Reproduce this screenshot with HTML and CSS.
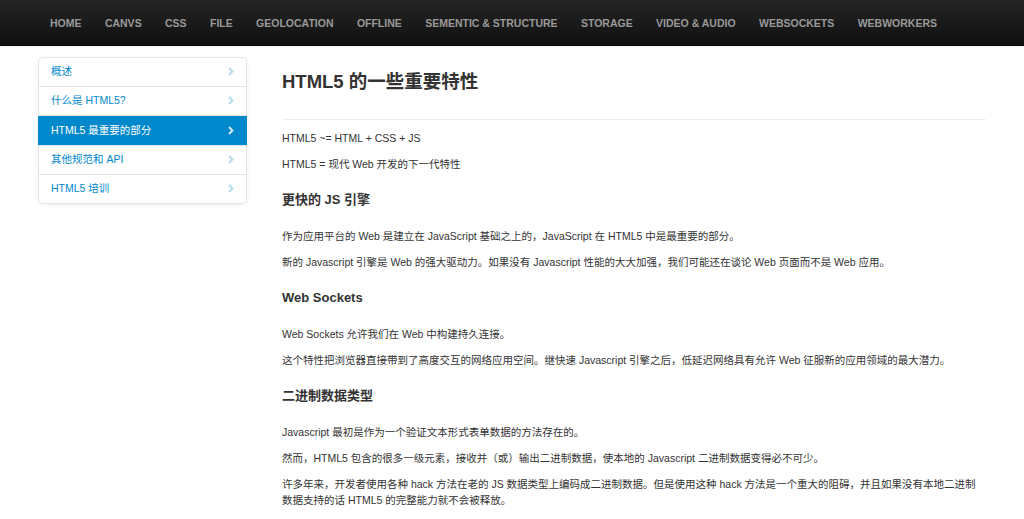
FILE: index.html
```html
<!DOCTYPE html>
<html lang="zh">
<head>
    <meta charset="UTF-8">
    <meta name="viewport" content="width=device-width, initial-scale=1.0">
    <title>HTML5 的一些重要特性</title>
    <link rel="stylesheet" href="styles.css">
</head>
<body>
    <div class="navbar">
        <ul class="nav">
            <li><a href="#">HOME</a></li>
            <li><a href="#">CANVS</a></li>
            <li><a href="#">CSS</a></li>
            <li><a href="#">FILE</a></li>
            <li><a href="#">GEOLOCATION</a></li>
            <li><a href="#">OFFLINE</a></li>
            <li><a href="#">SEMENTIC &amp; STRUCTURE</a></li>
            <li><a href="#">STORAGE</a></li>
            <li><a href="#">VIDEO &amp; AUDIO</a></li>
            <li><a href="#">WEBSOCKETS</a></li>
            <li><a href="#">WEBWORKERS</a></li>
        </ul>
    </div>
    <div class="container">
        <ul class="sidenav">
            <li><a href="#">概述<svg class="chevron" viewBox="0 0 6 9"><polyline points="1,1 4.5,4.5 1,8"/></svg></a></li>
            <li><a href="#">什么是 HTML5?<svg class="chevron" viewBox="0 0 6 9"><polyline points="1,1 4.5,4.5 1,8"/></svg></a></li>
            <li class="active"><a href="#">HTML5 最重要的部分<svg class="chevron" viewBox="0 0 6 9"><polyline points="1,1 4.5,4.5 1,8"/></svg></a></li>
            <li><a href="#">其他规范和 API<svg class="chevron" viewBox="0 0 6 9"><polyline points="1,1 4.5,4.5 1,8"/></svg></a></li>
            <li><a href="#">HTML5 培训<svg class="chevron" viewBox="0 0 6 9"><polyline points="1,1 4.5,4.5 1,8"/></svg></a></li>
        </ul>
        <div class="content">
            <div class="page-header">
                <h1>HTML5 的一些重要特性</h1>
            </div>
            <p>HTML5 ~= HTML + CSS + JS</p>
            <p>HTML5 = 现代 Web 开发的下一代特性</p>

            <h3>更快的 JS 引擎</h3>
            <p>作为应用平台的 Web 是建立在 JavaScript 基础之上的，JavaScript 在 HTML5 中是最重要的部分。</p>
            <p>新的 Javascript 引擎是 Web 的强大驱动力。如果没有 Javascript 性能的大大加强，我们可能还在谈论 Web 页面而不是 Web 应用。</p>

            <h3>Web Sockets</h3>
            <p>Web Sockets 允许我们在 Web 中构建持久连接。</p>
            <p>这个特性把浏览器直接带到了高度交互的网络应用空间。继快速 Javascript 引擎之后，低延迟网络具有允许 Web 征服新的应用领域的最大潜力。</p>

            <h3>二进制数据类型</h3>
            <p>Javascript 最初是作为一个验证文本形式表单数据的方法存在的。</p>
            <p>然而，HTML5 包含的很多一级元素，接收并（或）输出二进制数据，使本地的 Javascript 二进制数据变得必不可少。</p>
            <p>许多年来，开发者使用各种 hack 方法在老的 JS 数据类型上编码成二进制数据。但是使用这种 hack 方法是一个重大的阻碍，并且如果没有本地二进制数据支持的话 HTML5 的完整能力就不会被释放。</p>
        </div>
    </div>
</body>
</html>
```

FILE: styles.css
```css
html, body {
    margin: 0;
    padding: 0;
}
body {
    font-family: "Liberation Sans", Arial, "Noto Sans CJK SC", sans-serif;
    font-size: 10.5px;
    line-height: 16px;
    color: #333;
    background-color: #fff;
}
a {
    text-decoration: none;
}
.navbar {
    height: 46px;
    background-image: linear-gradient(to bottom, #252525, #0f0f0f);
    border-bottom: 1px solid #f2f2f2;
}
.nav {
    list-style: none;
    margin: 0 auto;
    padding: 0;
    width: 948px;
    display: flex;
}
.nav a {
    display: block;
    padding: 0 11.7px 0 12px;
    line-height: 47px;
    font-size: 10.5px;
    font-weight: bold;
    color: #999;
}
.nav li + li a {
    padding-left: 11.7px;
}
.container {
    width: 948px;
    margin: 0 auto;
    display: grid;
    grid-template-columns: 209px 1fr;
    gap: 35px;
    padding-top: 10px;
    align-items: start;
}
.sidenav {
    list-style: none;
    margin: 0;
    padding: 0;
    background-color: #fff;
    border: 1px solid #e5e5e5;
    border-radius: 5px;
    box-shadow: 0 1px 4px rgba(0, 0, 0, 0.065);
}
.sidenav li + li {
    border-top: 1px solid #e5e5e5;
}
.sidenav a {
    display: flex;
    justify-content: space-between;
    align-items: center;
    padding: 7px 12px 9px 12px;
    line-height: 12px;
    color: #0088cc;
}
.sidenav .active {
    margin: 0 -1px;
    position: relative;
}
.sidenav .active a {
    background-color: #0088cc;
    color: #fff;
    padding: 8px 13px 9px 13px;
}
.chevron {
    width: 6px;
    height: 9px;
    fill: none;
    stroke: #0088cc;
    stroke-width: 1.8;
    opacity: 0.3;
}
.active .chevron {
    stroke: #fff;
    opacity: 0.85;
}
.content {
    padding-top: 13px;
}
.page-header {
    padding-bottom: 25px;
    border-bottom: 1px solid #eee;
    margin-bottom: 10px;
}
.page-header h1 {
    margin: 0;
    font-size: 18.5px;
    line-height: 24px;
    font-weight: bold;
    color: #333;
}
.content p {
    margin: 0 0 10px;
}
.content h3 {
    margin: 18px 0 18px;
    font-size: 13px;
    line-height: 20px;
    font-weight: bold;
    color: #333;
}
```
